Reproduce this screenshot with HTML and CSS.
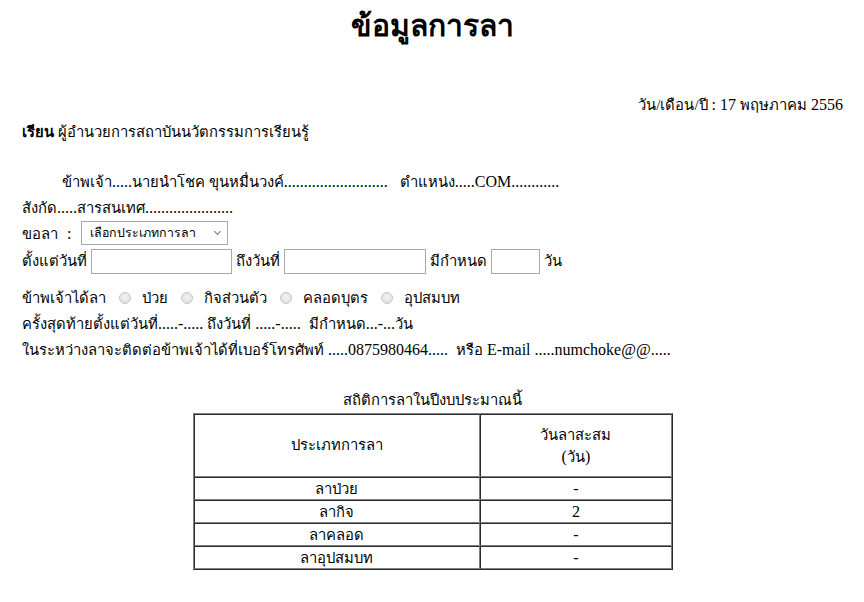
FILE: index.html
```html
<!DOCTYPE html>
<html lang="th">
<head>
<meta charset="utf-8">
<title>ข้อมูลการลา</title>
<link rel="stylesheet" href="styles.css">
</head>
<body>
<div class="page">
  <h1 class="title">ข้อมูลการลา</h1>
  <div class="date"><span class="th">วัน/เดือน/ปี</span> : 17 <span class="th">พฤษภาคม</span> 2556</div>
  <div class="row to"><b class="th">เรียน</b> <span class="th">ผู้อำนวยการสถาบันนวัตกรรมการเรียนรู้</span></div>
  <div class="row indent"><span class="th">ข้าพเจ้า</span>.....<span class="th">นายนำโชค ขุนหมื่นวงค์</span>..........................&nbsp;&nbsp; <span class="th">ตำแหน่ง</span>.....COM............</div>
  <div class="row"><span class="th">สังกัด</span>.....<span class="th">สารสนเทศ</span>......................</div>
  <div class="row sel-row"><span class="th">ขอลา</span><span class="colon">:</span><span class="select">เลือกประเภทการลา<span class="chev"></span></span></div>
  <div class="row inp-row"><span class="th">ตั้งแต่วันที่</span> <span class="inp w140"></span> <span class="th">ถึงวันที่</span> <span class="inp w141"></span> <span class="th">มีกำหนด</span> <span class="inp w48"></span> <span class="th">วัน</span></div>
  <div class="row radio-row"><span class="th">ข้าพเจ้าได้ลา</span><span class="radio"></span><span class="th">ป่วย</span><span class="radio"></span><span class="th">กิจส่วนตัว</span><span class="radio"></span><span class="th">คลอดบุตร</span><span class="radio"></span><span class="th">อุปสมบท</span></div>
  <div class="row"><span class="th">ครั้งสุดท้ายตั้งแต่วันที่</span>.....-..... <span class="th">ถึงวันที่</span> .....-.....&nbsp; <span class="th">มีกำหนด</span>...-...<span class="th">วัน</span></div>
  <div class="row"><span class="th">ในระหว่างลาจะติดต่อข้าพเจ้าได้ที่เบอร์โทรศัพท์</span> .....0875980464.....&nbsp; <span class="th">หรือ</span> E-mail .....numchoke@@.....</div>
  <div class="caption th">สถิติการลาในปีงบประมาณนี้</div>
  <table class="stats">
    <tr class="head"><td class="c1 th">ประเภทการลา</td><td class="c2"><span class="th">วันลาสะสม</span><br>(<span class="th">วัน</span>)</td></tr>
    <tr><td class="th">ลาป่วย</td><td>-</td></tr>
    <tr><td class="th">ลากิจ</td><td>2</td></tr>
    <tr><td class="th">ลาคลอด</td><td>-</td></tr>
    <tr><td class="th">ลาอุปสมบท</td><td>-</td></tr>
  </table>
</div>
</body>
</html>
```
FILE: styles.css
```css
html, body { margin: 0; padding: 0; background: #fff; }
body {
  font-family: "Liberation Serif", "Times New Roman", serif;
  font-size: 16px;
  color: #000;
}
.th { font-size: 14.8px; }
.page { padding: 0 21px 0 22px; }
.title {
  margin: 0;
  padding-top: 6px;
  height: 40px;
  line-height: 40px;
  text-align: center;
  font-size: 30px;
  font-weight: bold;
}
.date {
  margin-top: 46px;
  text-align: right;
  line-height: 26px;
  height: 26px;
}
.row { line-height: 26px; height: 26px; white-space: nowrap; }
.to { margin-top: 1px; }
.indent { margin-top: 24px; padding-left: 40px; }
.sel-row { height: 25px; display: flex; align-items: center; }
.colon { margin-left: 9px; }
.select {
  display: inline-flex;
  align-items: center;
  justify-content: space-between;
  box-sizing: border-box;
  width: 147px;
  height: 24px;
  margin-left: 10px;
  margin-top: -1px;
  padding: 0 7px 0 8px;
  border: 1px solid #a9a9a9;
  font-size: 12.4px;
  line-height: 22px;
}
.chev {
  width: 4px; height: 4px;
  border-right: 1px solid #777;
  border-bottom: 1px solid #777;
  transform: rotate(45deg);
  margin-top: -3px;
}
.inp-row { height: 30px; display: flex; align-items: center; }
.inp {
  display: inline-block;
  box-sizing: border-box;
  height: 25px;
  border: 1px solid #a9a9a9;
  margin: 1px 4px 0;
}
.w140 { width: 141px; }
.w141 { width: 142px; }
.w48 { width: 49px; }
.radio-row { margin-top: 9px; display: flex; align-items: center; }
.radio {
  display: inline-block;
  box-sizing: border-box;
  width: 12px; height: 12px;
  border-radius: 50%;
  border: 1px solid #c6c6c6;
  background: radial-gradient(circle at 50% 40%, #f2f2f2, #dcdcdc);
  margin: 0 11px 0 13px;
}
.caption {
  margin-top: 24px;
  text-align: center;
  line-height: 26px;
  height: 26px;
}
.stats {
  margin: 0 auto;
  width: 480px;
  border-collapse: separate;
  border-spacing: 0;
  border: 1px outset #808080;
}
.stats td {
  border: 1px inset #808080;
  text-align: center;
  padding: 0;
  height: 21px;
  line-height: 20px;
}
.stats .head td { height: 61px; line-height: 21px; }
.stats .c1 { width: 60%; }
```
